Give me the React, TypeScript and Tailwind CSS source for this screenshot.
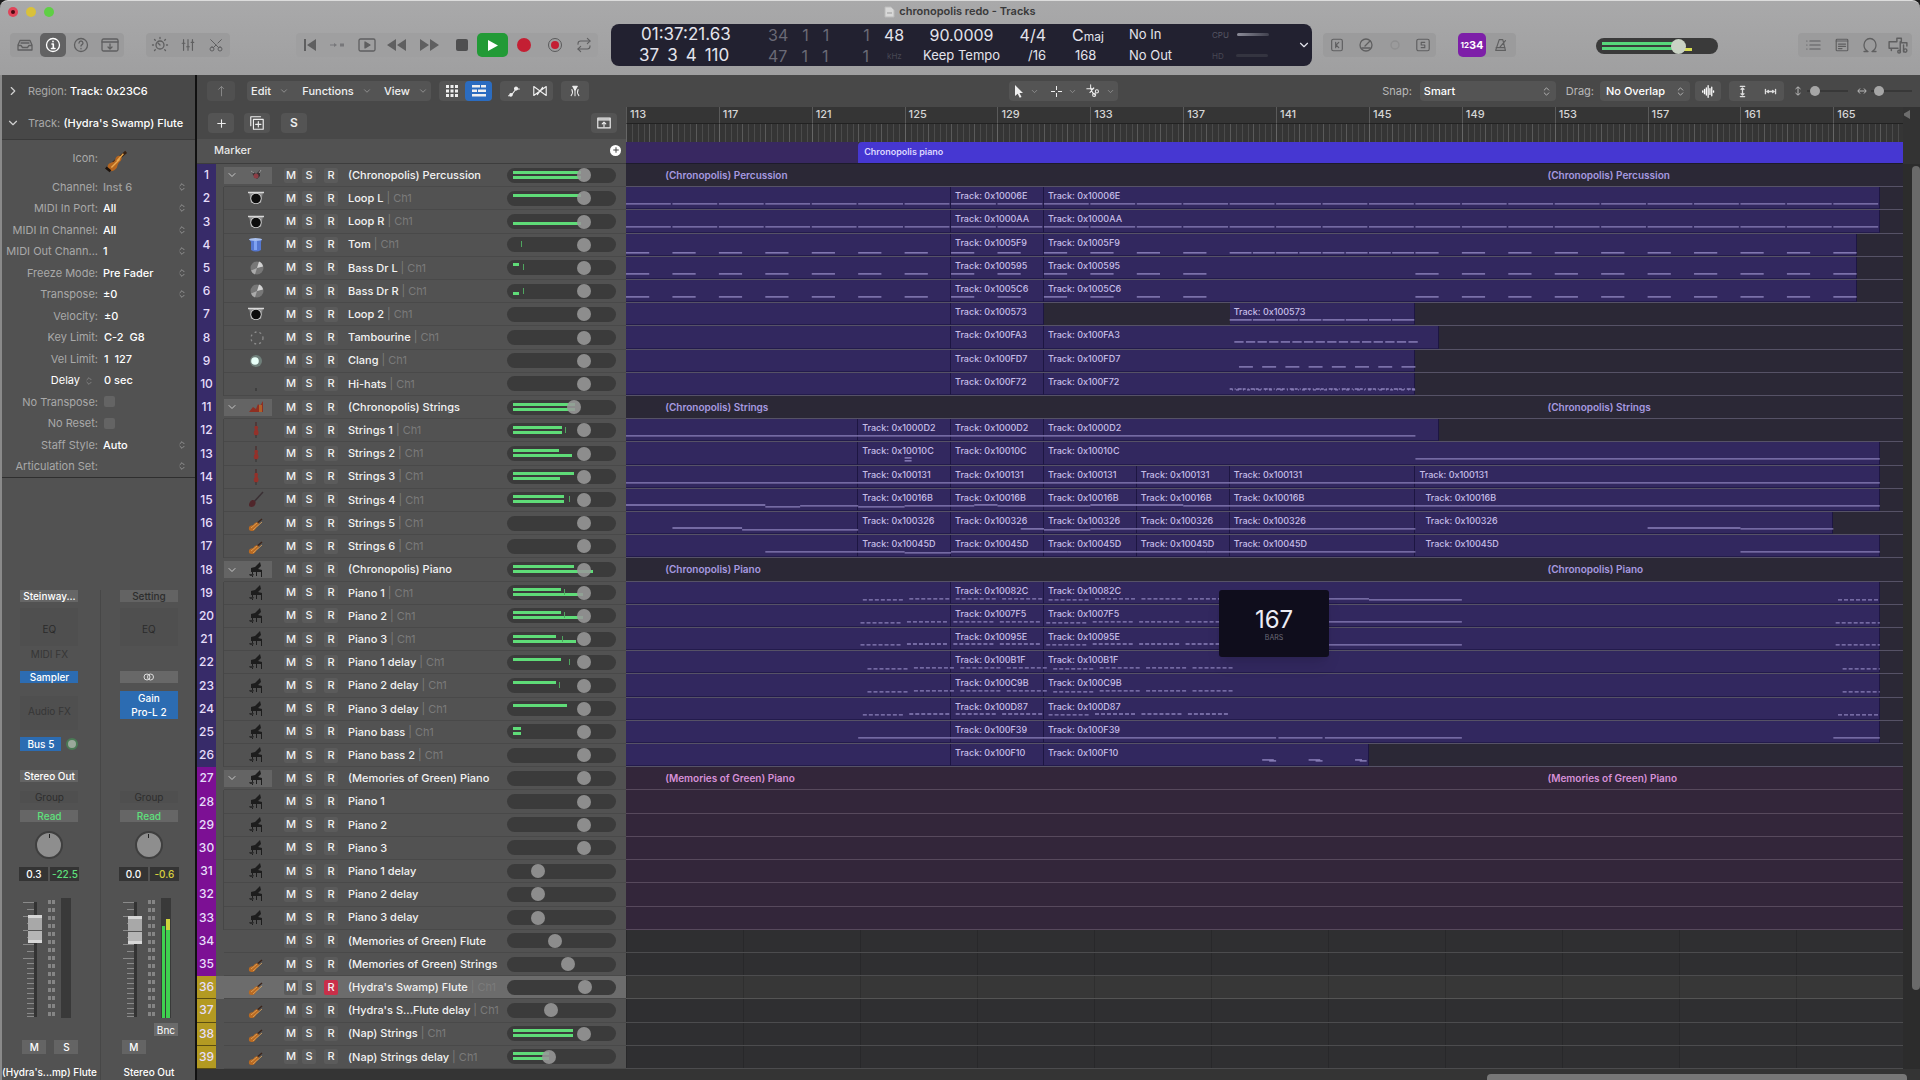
import type { ReactNode } from "react"
import { ChevronDown, ChevronRight, ChevronsUpDown, Repeat, Scissors, Plus } from "lucide-react"

const FIRST_BAR = 113
const BARS = 55

type Kind = "kit" | "loop" | "tom" | "cymbal" | "ring" | "spark" | "hat" | "section" | "cello" | "bass" | "violin" | "piano" | "none"

interface Track {
  name: string
  icon: Kind
  vol?: number
  ch?: boolean
  folder?: boolean
  top?: number
  bottom?: number
  peak?: number
  armed?: boolean
}

const tracks: Track[] = [
  { name: "(Chronopolis) Percussion", icon: "kit", folder: true, top: 68, bottom: 68 },
  { name: "Loop L", icon: "loop", ch: true, top: 68 },
  { name: "Loop R", icon: "loop", ch: true, bottom: 68 },
  { name: "Tom", icon: "tom", ch: true, peak: 8 },
  { name: "Bass Dr L", icon: "cymbal", ch: true, top: 6, peak: 10 },
  { name: "Bass Dr R", icon: "cymbal", ch: true, bottom: 6, peak: 10 },
  { name: "Loop 2", icon: "loop", ch: true },
  { name: "Tambourine", icon: "ring", ch: true },
  { name: "Clang", icon: "spark", ch: true },
  { name: "Hi-hats", icon: "hat", ch: true },
  { name: "(Chronopolis) Strings", icon: "section", folder: true, vol: 63, top: 62, bottom: 62 },
  { name: "Strings 1", icon: "cello", ch: true, top: 49, bottom: 49, peak: 52 },
  { name: "Strings 2", icon: "cello", ch: true, top: 46, bottom: 59 },
  { name: "Strings 3", icon: "cello", ch: true, top: 61, bottom: 47 },
  { name: "Strings 4", icon: "bass", ch: true, top: 51, bottom: 51, peak: 56 },
  { name: "Strings 5", icon: "violin", ch: true },
  { name: "Strings 6", icon: "violin", ch: true },
  { name: "(Chronopolis) Piano", icon: "piano", folder: true, top: 61, bottom: 80 },
  { name: "Piano 1", icon: "piano", ch: true, top: 48, bottom: 70, peak: 51 },
  { name: "Piano 2", icon: "piano", ch: true, top: 48, bottom: 70, peak: 51 },
  { name: "Piano 3", icon: "piano", ch: true, top: 43, bottom: 63, peak: 49 },
  { name: "Piano 1 delay", icon: "piano", ch: true, top: 48, peak: 56 },
  { name: "Piano 2 delay", icon: "piano", ch: true, top: 43, peak: 46 },
  { name: "Piano 3 delay", icon: "piano", ch: true, top: 54 },
  { name: "Piano bass", icon: "piano", ch: true, top: 8, bottom: 8 },
  { name: "Piano bass 2", icon: "piano", ch: true },
  { name: "(Memories of Green) Piano", icon: "piano", folder: true },
  { name: "Piano 1", icon: "piano" },
  { name: "Piano 2", icon: "piano" },
  { name: "Piano 3", icon: "piano" },
  { name: "Piano 1 delay", icon: "piano", vol: 25 },
  { name: "Piano 2 delay", icon: "piano", vol: 25 },
  { name: "Piano 3 delay", icon: "piano", vol: 25 },
  { name: "(Memories of Green) Flute", icon: "none", vol: 43 },
  { name: "(Memories of Green) Strings", icon: "violin", vol: 57 },
  { name: "(Hydra's Swamp) Flute", icon: "violin", ch: true, vol: 75, armed: true },
  { name: "(Hydra's S...Flute delay", icon: "violin", ch: true, vol: 39 },
  { name: "(Nap) Strings", icon: "violin", ch: true, top: 60, bottom: 60 },
  { name: "(Nap) Strings delay", icon: "violin", ch: true, vol: 37, top: 36, bottom: 36 },
]

// [from bar, to bar, shows label]
type Region = [number, number, boolean]
// [from bar, to bar, y, dash pattern]
type Note = [number, number, number, string?]

interface Lane {
  id?: string
  regions?: Region[]
  notes?: Note[]
}

const split = (end: number): Region[] => [
  [113, 127, false],
  [127, 131, true],
  [131, end, true],
]

const every = (from: number, to: number, step: number, len: number, y: number): Note[] => {
  const out: Note[] = []
  for (let b = from; b < to; b += step) out.push([b, b + len, y])
  return out
}

const strings = (end: number): Region[] => [
  [113, 123, false],
  [123, 127, true],
  [127, 131, true],
  [131, 135, true],
  [135, 139, true],
  [139, 147, true],
  [147, end, true],
]

const arps = (y: number, shift: number, last: number): Note[] => {
  const out: Note[] = []
  for (let b = 123; b < last; b += 2) {
    out.push([b + shift, b + shift + 1.8, y - (((b - 123) / 2) % 4 === 0 ? 0 : 1), "4 2"])
  }
  out.push([165 + shift, 167, y, "4 2"])
  return out
}

const lanes: Record<number, Lane> = {
  2: { id: "10006E", regions: split(167), notes: every(113, 167, 2, 1.93, 18) },
  3: { id: "1000AA", regions: split(167), notes: every(113, 167, 2, 1.93, 18) },
  4: { id: "1005F9", regions: split(166), notes: [...every(113, 139, 2, 1, 20), ...every(139, 147, 1, 0.94, 20), ...every(147, 166, 2, 1, 20)] },
  5: { id: "100595", regions: split(166), notes: [...every(113, 138, 2, 1, 18), ...every(147, 166, 2, 1, 18)] },
  6: { id: "1005C6", regions: split(166), notes: [...every(113, 138, 2, 1, 18), ...every(147, 166, 2, 1, 18)] },
  7: { id: "100573", regions: [[113, 127, false], [127, 131, true], [139, 147, true]], notes: every(139, 147, 1, 0.95, 18) },
  8: { id: "100FA3", regions: split(148), notes: every(139.2, 147, 0.5, 0.4, 17) },
  9: { id: "100FD7", regions: split(147), notes: every(139.4, 147, 1, 0.6, 18) },
  10: { id: "100F72", regions: split(147), notes: [[139, 147, 17, "3 2 1 2 4 1"], [139.1, 147, 18, "1 3 3 4"]] },
  12: { id: "1000D2", regions: [[113, 123, false], [123, 127, true], [127, 131, true], [131, 148, true]], notes: [[113, 147, 18]] },
  13: { id: "10010C", regions: [[113, 123, false], [123, 127, true], [127, 131, true], [131, 167, true]], notes: [[125, 125.3, 17], [125, 125.3, 20], [147, 167, 18]] },
  14: { id: "100131", regions: strings(167), notes: [[113, 167, 18]] },
  15: { id: "10016B", regions: strings(167), notes: [[113, 119, 17], [119, 120.5, 19], [120.5, 123, 18], [123, 125, 19], [125, 128, 18], [128, 129, 17], [129, 133, 18], [133, 137, 17], [137, 149, 18], [149, 167, 18]] },
  16: { id: "100326", regions: strings(165), notes: [[115, 118, 17], [118, 123, 19], [130, 131, 18], [131, 133, 19], [133, 139, 18], [139, 147, 18], [157, 161, 17], [161, 165, 18]] },
  17: { id: "10045D", regions: strings(167), notes: [[119, 125, 18], [125, 127, 19], [127, 132, 18], [132, 138, 18], [138, 147, 18], [161, 167, 18]] },
  19: { id: "10082C", regions: split(167), notes: [...arps(19, 0.2, 139), [139, 145, 18], [145, 149, 19]] },
  20: { id: "1007F5", regions: split(167), notes: [...arps(19, 0.1, 139), [139, 142, 18], [142, 145, 18], [145, 149, 18]] },
  21: { id: "10095E", regions: split(167), notes: [...arps(18, 0.1, 139), [139, 145, 18], [145, 149, 18]] },
  22: { id: "100B1F", regions: split(167), notes: arps(19, 0.4, 138) },
  23: { id: "100C9B", regions: split(167), notes: arps(19, 0.4, 138) },
  24: { id: "100D87", regions: split(167), notes: arps(18, 0.2, 138) },
  25: { id: "100F39", regions: split(167), notes: [[123, 141, 18], [141.1, 143, 18], [143.1, 149, 18], [165, 167, 18]] },
  26: { id: "100F10", regions: split(145), notes: [[140.4, 140.9, 17], [140.7, 141, 18], [142.4, 142.9, 17], [142.7, 143, 18], [144.4, 144.7, 17], [144.6, 144.9, 18]] },
}

function TrackIcon({ kind }: { kind: Kind }) {
  return (
    <svg viewBox="0 0 18 18" className="h-[18px] w-[18px] shrink-0">
      {kind === "kit" && (
        <g>
          <path d="M5 5l4 3 4-4v6l-3 3-4-4z" fill="#3a3234" />
          <circle cx="9" cy="10" r="2.500" fill="#8c3d45" />
          <path d="M4 5l3 2M14 4l-2 3" stroke="#999" />
        </g>
      )}
      {kind === "loop" && (
        <g>
          <path d="M2 3h14l-2 11H4z" fill="#8a8a8a" />
          <path d="M1 3.500h16" stroke="#d8d8d8" strokeWidth="1.500" />
          <circle cx="9" cy="9.500" r="5.500" fill="#ddd" />
          <circle cx="9" cy="9.500" r="4.800" fill="#0c0c0c" />
        </g>
      )}
      {kind === "tom" && (
        <g>
          <path d="M2 3h13l-1 3v8q-5 3-10 0V6z" fill="#5577d0" />
          <path d="M7 5h3v9H7z" fill="#7fa2f2" />
          <ellipse cx="8.500" cy="3.500" rx="6.500" ry="1.500" fill="#a9c0ee" />
        </g>
      )}
      {kind === "cymbal" && (
        <g>
          <circle cx="10" cy="9" r="6.500" fill="#777" />
          <path d="M10 9l2-6.500a6.500 6.500 0 0 1 4 5z" fill="#d2d2d2" />
          <path d="M10 9l-6 2.500a6.500 6.500 0 0 0 4 4z" fill="#aaa" />
        </g>
      )}
      {kind === "ring" && <circle cx="10" cy="9" r="6" fill="none" stroke="#8d8d8d" strokeWidth="1.300" strokeDasharray="2 3" />}
      {kind === "spark" && (
        <g>
          <circle cx="9" cy="9" r="6" fill="#6f7f7a" />
          <circle cx="8" cy="9" r="3.800" fill="#e8fff8" />
        </g>
      )}
      {kind === "hat" && <path d="M9 13v3" stroke="#2d2d2d" />}
      {kind === "section" && (
        <g fill="#8f2f22">
          <path d="M2 14l4-5 3 2 2-5 2 2 3-5v11z" />
          <path d="M12 7h3v7h-3z" fill="#b0602a" />
        </g>
      )}
      {kind === "cello" && (
        <g>
          <path d="M9 1v8" stroke="#4a2020" />
          <path d="M9 5c3 0 2 2 1.500 3.500 2 3 1 6-1.500 6s-3-3-1-6C7 7 7 5 9 5z" fill="#94312a" />
          <path d="M9 14v3" stroke="#333" />
        </g>
      )}
      {kind === "bass" && (
        <g>
          <path d="M6 12L16 1" stroke="#3a3034" strokeWidth="1.500" />
          <path d="M3 11c2-3 5-2 5.500 0s-1 5-4 5-3-3-1.500-5z" fill="#50262b" />
        </g>
      )}
      {kind === "violin" && (
        <g>
          <path d="M8 11l7-6" stroke="#3b241a" strokeWidth="1.500" />
          <path d="M8 9c3-2 5 1 3 3-2 1-2 2-3 3.500-2 2.500-7 2-6-1.500 0-3 3-2 4-3s1-1 2-2z" fill="#b96a22" />
          <path d="M4 14l6-5M15 8l-9 8" stroke="#e2a860" strokeWidth=".8" />
        </g>
      )}
      {kind === "piano" && (
        <g fill="#1d1d1d">
          <path d="M4 7l4-1 5-5 1 4-3 3 4 1v2H4z" />
          <path d="M5 11h1v5H5zM9 11h1v4H9zM14 10h1v6h-1z" />
          <path d="M2 13h5l-1 2H3z" fill="#2c2c2c" />
        </g>
      )}
    </svg>
  )
}

function BigViolin() {
  return (
    <svg viewBox="0 0 26 26" className="h-6 w-6">
      <path d="M10 14L24 2" stroke="#3a2212" strokeWidth="3" />
      <path d="M13 8c5-4 8 0 5 4-3 2-3 4-4 7-3 5-11 6-10-1 0-4 4-4 6-5s2-3 3-5z" fill="#b4651f" />
      <path d="M8 19l9-9M21 4l-7 8" stroke="#e8a850" strokeWidth="1.500" />
      <path d="M2 19l5 4" stroke="#1c120c" strokeWidth="3" />
    </svg>
  )
}

function ToolIcon({ children, size = 18 }: { children: ReactNode; size?: number }) {
  return (
    <svg width={size} height={size} viewBox="0 0 18 18" fill="none" stroke="currentColor" strokeWidth="1.300" strokeLinecap="round" strokeLinejoin="round">
      {children}
    </svg>
  )
}

function BarButton({ label, className = "", children }: { label: string; className?: string; children: ReactNode }) {
  return (
    <button type="button" aria-label={label} className={`flex h-6 items-center justify-center ${className}`}>
      {children}
    </button>
  )
}

function TopBar() {
  return (
    <header className="flex h-[75px] shrink-0 flex-col rounded-t-lg border-t border-[#dcdcdc] bg-gradient-to-b from-[#a9a9aa] to-[#9f9fa0] text-[#5f5f60]">
      <div className="grid h-5 grid-cols-[1fr_auto_1fr] items-center">
        <div className="flex gap-2 pl-2 pt-px">
          <button type="button" aria-label="Close" className="flex h-[10px] w-[10px] items-center justify-center rounded-full bg-[#e0455a]">
            <span className="h-1 w-1 rounded-full bg-[#4a0a12]" />
          </button>
          <button type="button" aria-label="Minimize" className="h-[10px] w-[10px] rounded-full bg-[#d9c13a]" />
          <button type="button" aria-label="Zoom" className="h-[10px] w-[10px] rounded-full bg-[#5fcf45]" />
        </div>
        <h1 className="flex items-center gap-1 pt-px text-[11px] font-semibold text-[#39393a]">
          <svg width="11" height="12" viewBox="0 0 11 12">
            <path d="M1 1h6l3 3v7H1z" fill="#d8d8d8" stroke="#bbb" />
            <path d="M3 7h5" stroke="#999" />
          </svg>
          chronopolis redo - Tracks
        </h1>
      </div>

      <div className="flex flex-1 items-start justify-between pt-[3px]">
        <div className="flex w-[611px] pt-[9px]">
          <div className="ml-[10px] flex rounded bg-[#9b9b9c]">
            <BarButton label="Library" className="w-[30px]">
              <ToolIcon>
                <path d="M2 9l2-4.500h10L16 9v5H2zM2 9.500h3l1.500 2h5l1.500-2h3M5 7h8" />
              </ToolIcon>
            </BarButton>
            <BarButton label="Inspector" className="w-[26px] rounded-[5px] bg-[#626263] text-white">
              <ToolIcon>
                <circle cx="9" cy="9" r="6.500" />
                <path d="M8 8h1.300v4.500M7.500 12.500h3.500M9 5.200v.5" strokeWidth="1.600" />
              </ToolIcon>
            </BarButton>
            <BarButton label="Quick Help" className="w-[30px]">
              <ToolIcon>
                <circle cx="9" cy="9" r="6.500" />
                <path d="M7 7q.3-2 2-2t2 2q0 1-1 1.600T9 10M9 12.500v.3" />
              </ToolIcon>
            </BarButton>
            <BarButton label="Toolbar" className="w-[28px]">
              <ToolIcon>
                <rect x="1" y="3" width="16" height="12" rx="1.500" />
                <path d="M1 6h16M9 8v5M7 11l2 2 2-2" />
              </ToolIcon>
            </BarButton>
          </div>
          <div className="ml-[22px] flex rounded bg-[#9b9b9c]">
            <BarButton label="Smart Controls" className="w-[28px]">
              <ToolIcon>
                <circle cx="9" cy="9" r="4" />
                <path d="M9 9l-2-2M9 1.500v1M3.500 3.500l.8.800M14.500 3.500l-.8.800M1.500 9h1M15.500 9h1M3.500 14.500l.8-.8M14.500 14.500l-.8-.8" />
              </ToolIcon>
            </BarButton>
            <BarButton label="Mixer" className="w-[28px]">
              <ToolIcon size={16}>
                <path d="M4 3v12M9 3v12M14 3v12M2.500 7h3M7.500 11h3M12.500 6h3" />
              </ToolIcon>
            </BarButton>
            <BarButton label="Editors" className="w-[28px]">
              <Scissors size={16} strokeWidth={1.500} className="-rotate-90" />
            </BarButton>
          </div>
          <div className="mr-[13px] ml-auto flex rounded bg-[#9f9fa0]">
            <BarButton label="Go to Beginning" className="w-[28px]">
              <svg width="14" height="14" viewBox="0 0 14 14" fill="currentColor"><path d="M1 1h2v12H1zM13 1v12L4 7z" /></svg>
            </BarButton>
            <BarButton label="Play from Selection" className="w-[28px]">
              <svg width="16" height="10" viewBox="0 0 16 10" fill="#77777a"><path d="M0 4.500h4V3l3 2-3 2V5.500H0zM10 3.500h4v3h-4z" /></svg>
            </BarButton>
            <BarButton label="Play from Region" className="w-[29px]">
              <ToolIcon>
                <rect x="1" y="3" width="16" height="12" rx="1.500" />
                <path d="M7 6l5 3-5 3z" fill="currentColor" />
              </ToolIcon>
            </BarButton>
            <BarButton label="Rewind" className="w-[31px]">
              <svg width="19" height="12" viewBox="0 0 19 12" fill="currentColor"><path d="M9 0v12L0 6zM19 0v12l-9-6z" /></svg>
            </BarButton>
            <BarButton label="Forward" className="w-[34px]">
              <svg width="19" height="12" viewBox="0 0 19 12" fill="currentColor"><path d="M0 0v12l9-6zM10 0v12l9-6z" /></svg>
            </BarButton>
            <BarButton label="Stop" className="w-[31px]">
              <span className="h-3 w-3 rounded-[2px] bg-[#4f4f50]" />
            </BarButton>
            <BarButton label="Play" className="w-[31px] rounded-[5px] bg-[#229a36] text-white">
              <svg width="12" height="13" viewBox="0 0 12 13" fill="currentColor"><path d="M1 1l10 5.500L1 12z" /></svg>
            </BarButton>
            <BarButton label="Record" className="w-[31px]">
              <span className="h-[14px] w-[14px] rounded-full bg-[#c41f33]" />
            </BarButton>
            <BarButton label="Capture Recording" className="w-[31px]">
              <span className="flex h-[14px] w-[14px] items-center justify-center rounded-full border border-[#5a5a5b]">
                <span className="h-2 w-2 rounded-full bg-[#c41f33]" />
              </span>
            </BarButton>
            <BarButton label="Cycle" className="w-[28px]">
              <Repeat size={16} strokeWidth={1.600} />
            </BarButton>
          </div>
        </div>

        <div className="grid h-[42px] w-[701px] shrink-0 grid-cols-[141px_120px_42px_95px_37px_50px_116px_64px_1fr] grid-rows-2 items-center rounded-lg bg-[#222130] text-[16px] leading-none text-[#e4e4ec]">
          <span className="pl-[30px] text-[17px]">01:37:21.63</span>
          <span className="flex gap-[14px] pl-[16px] text-[#6a6a76]"><b className="font-normal">34</b><b className="font-normal">1</b><b className="font-normal">1</b><b className="pl-5 font-normal">1</b></span>
          <span className="pl-[12px]">48</span>
          <span className="text-center">90.0009</span>
          <span className="text-right">4/4</span>
          <span className="pl-[26px] whitespace-nowrap">C<small className="text-[12px]">maj</small></span>
          <span className="pl-[33px] text-[13px]">No In</span>
          <span className="flex items-center gap-2 text-[8px] text-[#565663]">CPU<i className="h-[3px] w-8 rounded bg-gradient-to-r from-[#8c8c98] to-[#41414e]" /></span>
          <button type="button" aria-label="Display Mode" className="row-span-2 flex justify-end self-center pr-px"><ChevronDown size={14} /></button>
          <span className="flex gap-2 pl-[28px] text-[17px]"><b className="font-normal">37</b><b className="font-normal">3</b><b className="font-normal">4</b><b className="font-normal">110</b></span>
          <span className="flex gap-[14px] pl-[16px] text-[#6a6a76]"><b className="font-normal">47</b><b className="font-normal">1</b><b className="font-normal">1</b><b className="pl-5 font-normal">1</b></span>
          <span className="pl-[15px] text-[8px] text-[#484854]">kHz</span>
          <span className="text-center text-[13px] whitespace-nowrap">Keep Tempo</span>
          <span className="text-right text-[13px]">/16</span>
          <span className="pl-[29px] text-[13px]">168</span>
          <span className="pl-[33px] text-[13px]">No Out</span>
          <span className="flex items-center gap-2 text-[8px] text-[#484854]">HD<i className="ml-1 h-[3px] w-8 rounded bg-[#343440]" /></span>
        </div>

        <div className="flex w-[608px] pt-[9px]">
          <div className="ml-[11px] flex rounded bg-[#9b9b9c]">
            <BarButton label="Replace" className="w-[28px]">
              <ToolIcon size={16}><rect x="3" y="2.500" width="12" height="13" rx="2" /><path d="M7.500 6v6M11 6L8 9l3 3" /></ToolIcon>
            </BarButton>
            <BarButton label="Low Latency" className="w-[29px]">
              <ToolIcon><circle cx="9" cy="9" r="6" /><path d="M8 10l5-5M5 12h8" /></ToolIcon>
            </BarButton>
            <BarButton label="Tuner" className="w-[29px] opacity-20">
              <ToolIcon><circle cx="9" cy="9" r="4" /></ToolIcon>
            </BarButton>
            <BarButton label="Solo" className="w-[27px]">
              <ToolIcon size={16}><rect x="2" y="2.500" width="14" height="13" rx="2" /><path d="M11 6H7v3h4v3H7" /></ToolIcon>
            </BarButton>
          </div>
          <div className="ml-[22px] flex rounded bg-[#9b9b9c]">
            <BarButton label="Count In" className="w-[28px] rounded-[5px] bg-[#7d1fa8] text-[11px] leading-none font-bold text-white">
              <span className="text-[8px]">12</span>34
            </BarButton>
            <BarButton label="Metronome" className="w-[30px]">
              <ToolIcon size={16}><path d="M7 3h4l3 12H3zM3.500 12h10M8 11l6-7" /></ToolIcon>
            </BarButton>
          </div>
          <div className="relative mt-[5px] ml-[80px] h-4 w-[122px] rounded-full bg-[#3a3a3a]">
            <span className="absolute top-[4px] left-[6px] h-[3px] w-[80px] bg-[#57d67a]" />
            <span className="absolute top-[9px] left-[6px] h-[3px] w-[80px] bg-[#57d67a]" />
            <span className="absolute top-[10px] left-[86px] h-[3px] w-[10px] bg-[#d9de55]" />
            <input
              type="range"
              aria-label="Master Volume"
              defaultValue={70}
              className="absolute inset-0 h-4 w-full appearance-none bg-transparent [&::-webkit-slider-thumb]:h-[15px] [&::-webkit-slider-thumb]:w-[15px] [&::-webkit-slider-thumb]:appearance-none [&::-webkit-slider-thumb]:rounded-full [&::-webkit-slider-thumb]:bg-[#c9d2c4]"
            />
          </div>
          <div className="mr-[8px] ml-auto flex rounded bg-[#9b9b9c]">
            <BarButton label="List Editors" className="w-[29px]">
              <ToolIcon size={16}><path d="M5.500 4.500H17M5.500 9H17M5.500 13.500H17M2 4.500h.2M2 9h.2M2 13.500h.2" /></ToolIcon>
            </BarButton>
            <BarButton label="Note Pads" className="w-[29px]">
              <ToolIcon size={16}><rect x="2.500" y="2.500" width="13" height="13" rx="1" /><path d="M2.500 4.500h13M5 8h8M5 10.500h8M5 13h4" /></ToolIcon>
            </BarButton>
            <BarButton label="Loop Browser" className="w-[28px]">
              <ToolIcon><path d="M3 15.500h4q-4-2-4-6.500a6 6.500 0 0 1 12 0q0 4.500-4 6.500h4" /></ToolIcon>
            </BarButton>
            <BarButton label="Media Browser" className="w-[28px]">
              <ToolIcon size={20}><path d="M8 6H1v6h8M3 12v2M8 3h4v4h5v3M11 6v9M14 9v6M8 3v3" /><circle cx="10" cy="15" r="1.200" /><circle cx="15.500" cy="14" r="1.500" /></ToolIcon>
            </BarButton>
          </div>
        </div>
      </div>
    </header>
  )
}

const params = [
  { label: "Channel:", value: "Inst 6", dim: true, options: true },
  { label: "MIDI In Port:", value: "All", options: true },
  { label: "MIDI In Channel:", value: "All", options: true },
  { label: "MIDI Out Chann...", value: "1", options: true },
  { label: "Freeze Mode:", value: "Pre Fader", options: true },
  { label: "Transpose:", value: "±0", options: true },
  { label: "Velocity:", value: "±0" },
  { label: "Key Limit:", value: "C-2  G8" },
  { label: "Vel Limit:", value: "1  127" },
  { label: "Delay", value: "0 sec", delay: true },
  { label: "No Transpose:", check: true },
  { label: "No Reset:", check: true },
  { label: "Staff Style:", value: "Auto", options: true },
  { label: "Articulation Set:", value: "", options: true },
]

function Inspector() {
  return (
    <aside className="flex w-[197px] shrink-0 flex-col border-r-2 border-l-2 border-r-[#111] border-l-[#8a8a8a] bg-[#525252] text-[11px] text-[#a9a9a9]">
      <div className="flex h-8 shrink-0 items-center gap-2 bg-[#484848] pl-1">
        <ChevronRight size={14} className="text-[#d0d0d0]" />
        <span className="whitespace-nowrap">Region: <b className="font-medium text-white">Track: 0x23C6</b></span>
      </div>
      <div className="flex h-[33px] shrink-0 items-center gap-2 border-b border-[#3a3a3a] bg-[#484848] pl-1">
        <ChevronDown size={14} className="shrink-0 text-[#d0d0d0]" />
        <span className="whitespace-nowrap">Track: <b className="font-medium text-white">(Hydra's Swamp) Flute</b></span>
      </div>
      <div className="flex h-9 shrink-0 items-center">
        <span className="w-24 text-right">Icon:</span>
        <button type="button" aria-label="Track icon" className="mt-2 ml-[6px]"><BigViolin /></button>
      </div>
      <div className="flex h-[302px] shrink-0 flex-col border-b border-[#2f2f2f]">
        {params.map((p) => (
          <div key={p.label} className="flex min-h-0 flex-1 items-center">
            <label htmlFor={p.label} className={`w-24 shrink-0 text-right whitespace-nowrap ${p.delay ? "pr-1 text-white" : ""}`}>
              {p.label}
              {p.delay && <ChevronsUpDown size={10} className="ml-1 inline text-[#8a8a8a]" />}
            </label>
            {p.check ? (
              <input id={p.label} type="checkbox" className="ml-[6px] h-[11px] w-[11px] appearance-none rounded-[2px] bg-[#646464]" />
            ) : p.options ? (
              <>
                <select id={p.label} className={`ml-[5px] w-[74px] appearance-none bg-transparent font-medium ${p.dim ? "text-[#a0a0a0]" : "text-white"}`}>
                  <option>{p.value}</option>
                </select>
                <ChevronsUpDown size={10} className="text-[#9c9c9c]" />
              </>
            ) : (
              <input id={p.label} defaultValue={p.value} className="ml-[6px] w-[74px] bg-transparent font-medium text-white" />
            )}
          </div>
        ))}
      </div>
      <div className="flex min-h-0 flex-1 items-end">
        <ChannelStrip name="(Hydra's...mp) Flute" setting="Steinway..." gain="0.3" peak="-22.5" />
        <ChannelStrip name="Stereo Out" setting="Setting" gain="0.0" peak="-0.6" master />
      </div>
    </aside>
  )
}

interface StripProps {
  name: string
  setting: string
  gain: string
  peak: string
  master?: boolean
}

function ChannelStrip({ name, setting, gain, peak, master }: StripProps) {
  const slot = "flex h-3 w-[58px] items-center justify-center text-[10px] leading-none"
  return (
    <div className={`flex h-[490px] flex-1 flex-col items-center text-[10px] ${master ? "pl-[2px]" : "border-r border-[#474747] pr-[3px]"}`}>
      <button type="button" className={`${slot} font-medium ${master ? "bg-[#636363] text-[#2d2d2d]" : "bg-[#666] text-white"}`}>{setting}</button>
      <button type="button" className="mt-[6px] flex h-[38px] w-[58px] items-center justify-center bg-[#4f4f4f] pt-1 text-[#2b2b2b]">EQ</button>
      <span className="mt-[2px] flex h-3 items-center text-[10px] text-[#363636]">{master ? "" : "MIDI FX"}</span>
      {master ? (
        <>
          <button type="button" aria-label="Stereo format" className={`${slot} mt-[11px] bg-[#686868] text-[#ddd]`}>
            <svg width="12" height="8" viewBox="0 0 12 8" fill="none" stroke="currentColor"><circle cx="4" cy="4" r="3" /><circle cx="7.500" cy="4" r="3" /></svg>
          </button>
          <div className="mt-2 flex h-7 w-[58px] flex-col bg-[#2c6cb2] text-white">
            <button type="button" className="h-[14px] leading-none font-medium">Gain</button>
            <button type="button" className="h-[14px] leading-none font-medium">Pro-L 2</button>
          </div>
          <div className="h-[72px]" />
        </>
      ) : (
        <>
          <button type="button" className={`${slot} mt-[11px] bg-[#2c6cb2] font-medium text-white`}>Sampler</button>
          <button type="button" className="mt-[13px] flex h-[34px] w-[58px] items-center justify-center bg-[#4f4f4f] pb-1 text-[#363636]">Audio FX</button>
          <div className="mt-[7px] flex h-[14px] w-[58px] items-center justify-between">
            <button type="button" className="h-[14px] w-[41px] bg-[#2c6cb2] leading-none font-medium text-white">Bus 5</button>
            <span className="h-3 w-3 rounded-full border-2 border-[#4a7a55] bg-[#9aa89b]" />
          </div>
          <button type="button" className={`${slot} mt-[19px] mb-[9px] bg-[#646464] font-medium text-white`}>Stereo Out</button>
        </>
      )}
      <button type="button" className={`${slot} bg-[#4f4f4f] text-[#2d2d2d]`}>Group</button>
      <button type="button" className={`${slot} mt-[7px] bg-[#666] font-medium text-[#5fe07c]`}>Read</button>
      <div className="mt-[9px] flex h-7 w-7 justify-center rounded-full border-2 border-[#3f3f3f] bg-[#8e8e8e]" role="img" aria-label="Pan">
        <span className="mt-px h-1 w-px bg-[#222]" />
      </div>
      <div className="mt-2 flex h-[14px] w-[60px] gap-[2px] leading-[14px] font-medium">
        <span className="flex-1 bg-[#343434] text-center text-white">{gain}</span>
        <span className={`flex-1 bg-[#343434] text-center ${master ? "text-[#d7cf3e]" : "text-[#5fe07c]"}`}>{peak}</span>
      </div>
      <div className="mt-[17px] flex h-[120px] w-[60px] gap-1 pl-1">
        <div className="relative h-full w-5">
          <svg className="absolute top-1 left-0 h-[115px] w-[11px]" viewBox="0 0 11 115" preserveAspectRatio="none" stroke="#8a8a8a">
            {[0, 7, 14, 21, 28, 35, 42, 49, 56, 61, 66, 71, 76, 81, 86, 91, 96, 101, 106, 111, 114].map((y) => (
              <path key={y} d={`M${y % 14 ? 4 : 0} ${y + 0.5}H11`} />
            ))}
          </svg>
          <span className="absolute top-1 left-[11px] h-[115px] w-[3px] bg-[#333]" />
          <input
            type="range"
            aria-label={`${name} fader`}
            defaultValue={master ? 80 : 81}
            className="absolute top-0 left-[5px] h-full w-[14px] appearance-none bg-transparent [direction:rtl] [writing-mode:vertical-lr] [&::-webkit-slider-thumb]:h-[28px] [&::-webkit-slider-thumb]:w-[14px] [&::-webkit-slider-thumb]:appearance-none [&::-webkit-slider-thumb]:bg-[linear-gradient(#d5d5d5_0_12%,#a8a8a8_12%_52%,#555_52%_56%,#b5b5b5_56%_88%,#d8d8d8_88%)]"
          />
        </div>
        <svg className="h-full w-[10px]" viewBox="0 0 10 120" fill="#858585">
          {Array.from({ length: 15 }, (_, i) => (
            <path key={i} d={`M1 ${i * 8 + 2}h3v4h-3zM5 ${i * 8 + 2}h3v4h-3z`} />
          ))}
        </svg>
        <div className="flex h-full w-[10px] items-end gap-px bg-[#393939] px-px">
          {master && (
            <>
              <span className="h-[92px] flex-1 bg-[#3fd04f]" />
              <span className="h-[99px] flex-1 border-t-[11px] border-[#cfd23c] bg-[#3fd04f]" />
            </>
          )}
        </div>
      </div>
      <div className="mt-[5px] flex h-[13px] w-[58px] justify-end">
        {master && <button type="button" className="w-[24px] bg-[#6b6b6b] leading-none text-white">Bnc</button>}
      </div>
      <div className="mt-1 flex h-[14px] w-[60px] gap-2 pl-[3px] font-medium text-white">
        <button type="button" className="w-6 bg-[#646464] leading-none">M</button>
        {!master && <button type="button" className="w-6 bg-[#646464] leading-none">S</button>}
      </div>
      <span className="mt-[10px] flex h-4 items-center font-medium whitespace-nowrap text-white">{name}</span>
    </div>
  )
}

function Toolbar() {
  const btn = "flex h-5 items-center justify-center"
  return (
    <div className="flex h-8 shrink-0 items-center bg-[#484848] text-[11px] text-[#b9b9b9]">
      <div className="flex flex-1 items-center pl-[10px] font-medium text-[#efefef]">
        <button type="button" aria-label="Back" className={`${btn} w-[28px] rounded bg-[#505050] text-[#8a8a8a]`}>
          <ToolIcon size={13}><path d="M5 6l4-4 3 3M9 2v13" /></ToolIcon>
        </button>
        <div className="ml-3 flex rounded bg-[#545454]">
          <button type="button" className={`${btn} w-[46px] gap-2`}>Edit <ChevronDown size={10} className="text-[#999]" /></button>
          <button type="button" className={`${btn} w-[88px] gap-2`}>Functions <ChevronDown size={10} className="text-[#999]" /></button>
          <button type="button" className={`${btn} w-[50px] gap-2`}>View <ChevronDown size={10} className="text-[#999]" /></button>
        </div>
        <div className="ml-2 flex rounded bg-[#545454]">
          <button type="button" aria-label="Grid" className={`${btn} w-[26px]`}>
            <svg width="12" height="12" viewBox="0 0 12 12" fill="currentColor"><path d="M0 0h3v3H0zM4.500 0h3v3h-3zM9 0h3v3H9zM0 4.500h3v3H0zM4.500 4.500h3v3h-3zM9 4.500h3v3H9zM0 9h3v3H0zM4.500 9h3v3h-3zM9 9h3v3H9z" /></svg>
          </button>
          <button type="button" aria-label="Tracks view" className={`${btn} w-[27px] rounded bg-[#2b6cc0]`}>
            <svg width="14" height="12" viewBox="0 0 14 12" fill="currentColor"><path d="M0 0h8v2.500H0zM9 0h5v2.500H9zM0 4.500h5V7H0zM6 4.500h8V7H6zM0 9h14v2.500H0z" /></svg>
          </button>
        </div>
        <div className="ml-2 flex rounded bg-[#545454]">
          <button type="button" aria-label="Automation" className={`${btn} w-[26px]`}>
            <ToolIcon size={15}><path d="M3 14h3l6-8h4" /><circle cx="6" cy="13" r="1.500" fill="currentColor" /><circle cx="12" cy="5.500" r="1.800" fill="currentColor" /></ToolIcon>
          </button>
          <button type="button" aria-label="Flex" className={`${btn} w-[27px]`}>
            <ToolIcon size={16}><path d="M2 4v10l7-5zM16 4v10l-7-5zM6 13l6-8" /></ToolIcon>
          </button>
        </div>
        <button type="button" aria-label="Catch" className={`${btn} ml-2 w-[28px] rounded bg-[#545454]`}>
          <ToolIcon size={14}><path d="M6 3h6l-3 5z" fill="currentColor" /><path d="M9 7v8M5 7q2 4-1 8M13 7q-2 4 1 8" /></ToolIcon>
        </button>
      </div>

      <div className="ml-2 flex rounded bg-[#545454] text-[#efefef]">
        <button type="button" aria-label="Pointer tool" className={`${btn} w-[35px] gap-[6px]`}>
          <svg width="10" height="13" viewBox="0 0 10 13" fill="currentColor"><path d="M1 0l8 8H5.500l2 4-1.800.8-2-4L1 11z" /></svg>
          <ChevronDown size={9} className="text-[#999]" />
        </button>
        <button type="button" aria-label="Marquee tool" className={`${btn} w-[39px] gap-[6px]`}>
          <svg width="11" height="11" viewBox="0 0 11 11" stroke="currentColor"><path d="M5.500 0v4M5.500 7v4M0 5.500h4M7 5.500h4" /></svg>
          <ChevronDown size={9} className="text-[#999]" />
        </button>
        <button type="button" aria-label="Fade tool" className={`${btn} w-[35px] gap-[6px]`}>
          <ToolIcon size={14}><path d="M1 6h9M6 1q-1 7 5 13M5 11l5-6" /><circle cx="10.500" cy="14" r="2" /><circle cx="14" cy="9.500" r="2" /></ToolIcon>
          <ChevronDown size={9} className="text-[#999]" />
        </button>
      </div>

      <div className="flex flex-1 items-center justify-end pr-[8px]">
        <label htmlFor="snap">Snap:</label>
        <span className="relative ml-2 flex h-5 w-[136px] items-center rounded bg-[#545454]">
          <select id="snap" className="w-full appearance-none bg-transparent pl-1 font-medium text-white"><option>Smart</option></select>
          <ChevronsUpDown size={11} className="pointer-events-none absolute right-1" />
        </span>
        <label htmlFor="drag" className="ml-[10px]">Drag:</label>
        <span className="relative ml-[6px] flex h-5 w-[90px] items-center rounded bg-[#545454]">
          <select id="drag" className="w-full appearance-none bg-transparent pl-[6px] font-medium text-white"><option>No Overlap</option></select>
          <ChevronsUpDown size={11} className="pointer-events-none absolute right-1" />
        </span>
        <button type="button" aria-label="Waveform zoom" className={`${btn} ml-[5px] w-[26px] rounded bg-[#545454] text-white`}>
          <ToolIcon size={13}><path d="M1 8v2M3.500 6v6M6 4v10M8.500 1v16M11 5v8M13.500 3v12M16 8v2" strokeWidth="1.800" /></ToolIcon>
        </button>
        <div className="ml-[8px] flex rounded bg-[#545454] text-[#ddd]">
          <button type="button" aria-label="Fit vertically" className={`${btn} w-[27px]`}>
            <ToolIcon size={13}><path d="M6 2h6M6 16h6M9 4v10M7 6l2-2 2 2M7 12l2 2 2-2" strokeWidth="1.800" /></ToolIcon>
          </button>
          <button type="button" aria-label="Fit horizontally" className={`${btn} w-[28px]`}>
            <ToolIcon size={13}><path d="M2 6v6M16 6v6M4 9h10M6 7.500L4 9l2 1.500M12 7.500l2 1.500-2 1.500" strokeWidth="1.800" /></ToolIcon>
          </button>
        </div>
        <ZoomSlider id="vzoom" label="Vertical zoom" vertical />
        <ZoomSlider id="hzoom" label="Horizontal zoom" />
      </div>
    </div>
  )
}

function ZoomSlider({ id, label, vertical }: { id: string; label: string; vertical?: boolean }) {
  return (
    <div className="ml-[9px] flex items-center gap-1">
      <label htmlFor={id} aria-label={label} className={vertical ? "rotate-90" : ""}>
        <svg width="10" height="8" viewBox="0 0 10 8" fill="none" stroke="currentColor"><path d="M1 4h8M3 1.500L.8 4 3 6.500M7 1.500L9.200 4 7 6.500" /></svg>
      </label>
      <input
        id={id}
        type="range"
        defaultValue={10}
        className="h-[10px] w-[41px] appearance-none bg-[linear-gradient(#383838,#383838)] bg-[length:100%_2px] bg-center bg-no-repeat [&::-webkit-slider-thumb]:h-[10px] [&::-webkit-slider-thumb]:w-[10px] [&::-webkit-slider-thumb]:appearance-none [&::-webkit-slider-thumb]:rounded-full [&::-webkit-slider-thumb]:bg-[#a6a6a6]"
      />
    </div>
  )
}

function numberColor(n: number) {
  if (n >= 36) return "bg-[#b39a22] border-[#5a4d12]"
  if (n >= 27) return "bg-[#7c1094] border-[#7c1094]"
  return "bg-[#372b69] border-[#372b69]"
}

function TrackHeader({ track, n }: { track: Track; n: number }) {
  const square = "flex h-[15px] w-[14px] items-center justify-center rounded-[2px] leading-none"
  const childOf = !track.folder && n < 34
  return (
    <li className={`flex min-h-0 flex-1 items-stretch ${track.armed ? "bg-[#6c6c6c]" : ""}`}>
      <span className={`flex w-[19px] shrink-0 items-center justify-center border-b text-[12px] font-medium text-[#e6defa] ${numberColor(n)}`}>{n}</span>
      <div className="flex w-[8px] shrink-0 justify-end">{childOf && <span className="w-px bg-[#464646]" />}</div>
      <div className="flex min-w-0 flex-1 items-center border-b border-[#494949] text-[11px] font-medium text-[#f2f2f2]">
        <div className={`flex h-[17px] w-[48px] shrink-0 items-center ${track.folder ? "bg-[#646464]" : ""}`}>
          <span className="w-[23px] pl-[2px]">{track.folder && <ChevronDown size={12} className="text-[#c8c8c8]" />}</span>
          <TrackIcon kind={track.icon} />
        </div>
        <button type="button" aria-label={`Mute ${track.name}`} className={`${square} ml-[12px] bg-[#5b5b5b]`}>M</button>
        <button type="button" aria-label={`Solo ${track.name}`} className={`${square} ml-[4px] bg-[#5b5b5b]`}>S</button>
        <button type="button" aria-label={`Record ${track.name}`} className={`${square} ml-[8px] ${track.armed ? "bg-[#c92f49]" : "bg-[#5b5b5b]"}`}>R</button>
        <span className="ml-[10px] flex gap-[3px] whitespace-nowrap">
          {track.name}
          {track.ch && <span className="font-normal text-[#7b7b7b]">| Ch1</span>}
        </span>
        <div className="relative mr-[10px] ml-auto h-[15px] w-[109px] shrink-0 rounded-full bg-[#3b3b3b]">
          {track.top && <span className="absolute top-[3px] left-[6px] h-[3px] bg-[#5fdc78]" style={{ width: track.top }} />}
          {track.bottom && <span className="absolute top-[8px] left-[6px] h-[3px] bg-[#5fdc78]" style={{ width: track.bottom }} />}
          {track.peak && <span className="absolute top-[4px] h-[6px] w-px bg-[#4fa55f]" style={{ left: track.peak + 6 }} />}
          <input
            type="range"
            aria-label={`${track.name} volume`}
            defaultValue={track.vol ?? 74}
            className="absolute inset-0 h-full w-full appearance-none bg-transparent [&::-webkit-slider-thumb]:h-[14px] [&::-webkit-slider-thumb]:w-[14px] [&::-webkit-slider-thumb]:appearance-none [&::-webkit-slider-thumb]:rounded-full [&::-webkit-slider-thumb]:bg-[#989898e0]"
          />
        </div>
      </div>
    </li>
  )
}

function TrackHeaders() {
  return (
    <section className="flex w-[429px] shrink-0 flex-col bg-[#525252]">
      <div className="flex h-8 shrink-0 items-center bg-[#484848] pl-[11px] text-[#eee]">
        <button type="button" aria-label="New track" className="flex h-5 w-[26px] items-center justify-center rounded bg-[#545454]"><Plus size={13} /></button>
        <button type="button" aria-label="Duplicate track" className="ml-[10px] flex h-5 w-[26px] items-center justify-center rounded bg-[#545454]">
          <ToolIcon size={16}><path d="M2 12V2h11M5 5h11v11H5zM10.500 7.500v6M7.500 10.500h6" /></ToolIcon>
        </button>
        <button type="button" className="ml-[11px] flex h-5 w-[26px] items-center justify-center rounded bg-[#545454] text-[12px] font-semibold">S</button>
        <button type="button" aria-label="Global tracks" className="mr-[9px] ml-auto flex h-5 w-[26px] items-center justify-center rounded bg-[#545454]">
          <ToolIcon size={16}><path d="M2 3.500h14v11H2zM2 5.500h14M9 13V8M7 10l2-2 2 2" /></ToolIcon>
        </button>
      </div>
      <div className="flex h-[25px] shrink-0 items-center border-b border-[#3d3d3d] pb-[2px] pl-[17px] text-[11px] font-medium text-[#e8e8e8]">
        Marker
        <button type="button" aria-label="Add marker" className="mr-[5px] ml-auto flex h-[11px] w-[11px] items-center justify-center rounded-full bg-white text-[#444]"><Plus size={8} strokeWidth={3} /></button>
      </div>
      <ol className="flex min-h-0 flex-1 flex-col">
        {tracks.map((track, i) => (
          <TrackHeader key={i} track={track} n={i + 1} />
        ))}
      </ol>
      <div className="h-[11px] shrink-0 bg-[#343434]" />
    </section>
  )
}

function span(from: number, to: number) {
  return { gridColumn: `${from - FIRST_BAR + 1} / ${to - FIRST_BAR + 1}`, gridRow: 1 }
}

function laneColor(n: number) {
  if (n === 36) return "bg-[#373737] border-[#545454]"
  if (n >= 34) return "bg-[#2f2f31] border-[#4c4c4e]"
  if (n >= 27) return "bg-[#33263a] border-[#57495c]"
  return "bg-[#2b2836] border-[#565266]"
}

const barGrid = "grid grid-cols-[repeat(55,minmax(0,1fr))]"

function TimelineLane({ n }: { n: number }) {
  const lane = lanes[n]
  const track = tracks[n - 1]
  const beats = n >= 34 ? "bg-[image:repeating-linear-gradient(90deg,#00000026_0_1px,transparent_1px_117px)]" : ""
  return (
    <div className={`relative min-h-0 flex-1 border-b ${barGrid} ${laneColor(n)} ${beats}`}>
      {track.folder &&
        [114, 152].map((bar) => (
          <span
            key={bar}
            style={span(bar, bar + 10)}
            className={`flex items-center pl-4 text-[10px] font-semibold whitespace-nowrap ${n >= 27 ? "text-[#d790d8]" : "text-[#a79ae0]"}`}
          >
            {track.name}
          </span>
        ))}
      {lane?.regions?.map(([from, to, labelled]) => (
        <div
          key={from}
          style={span(from, to)}
          className={`border-r border-b border-r-[#1d1642] border-b-[#231b4c] bg-[#32285f] pt-[3px] text-[9px] leading-[11px] font-medium whitespace-nowrap text-[#c6bee8] ${from === 147 && n > 14 ? "pl-[10px]" : "pl-1"}`}
        >
          {labelled && `Track: 0x${lane.id}`}
        </div>
      ))}
      {lane?.notes && (
        <svg className="absolute inset-0 h-full w-full" viewBox="0 0 1276 23" preserveAspectRatio="none" stroke="#8b80ba" strokeWidth="1.500">
          {lane.notes.map(([from, to, y, dash], i) => (
            <path
              key={i}
              d={`M${(from - FIRST_BAR) * 23.2} ${y - 0.5}H${(to - FIRST_BAR) * 23.2}`}
              strokeDasharray={dash}
            />
          ))}
        </svg>
      )}
    </div>
  )
}

function Timeline() {
  const labels = Array.from({ length: 14 }, (_, i) => FIRST_BAR + i * 4)
  return (
    <section className="relative flex min-w-0 flex-1 flex-col bg-[#343434]">
      <div className="flex min-h-0 flex-1">
        <div className="flex min-w-0 flex-1 flex-col">
          <div className={`h-[35px] shrink-0 grid-rows-[17px_18px] bg-[#353535] ${barGrid}`}>
            {labels.map((bar) => (
              <span key={bar} style={span(bar, Math.min(bar + 4, FIRST_BAR + BARS))} className="border-b border-l border-b-[#222] border-l-[#5a5a5a] pl-[3px] text-[11px] leading-[14px] font-medium text-[#d5d5d5]">
                {bar}
              </span>
            ))}
            {Array.from({ length: BARS }, (_, i) => (
              <span key={i} style={{ gridRow: 2 }} className={`border-l ${i % 4 === 0 ? "border-[#666]" : "border-[#5a5a5a]"}`}>
                <span className="block h-full bg-[image:repeating-linear-gradient(90deg,transparent_0_5px,#4b4b4b_5px_6px)]" />
              </span>
            ))}
          </div>
          <div className={`h-[22px] shrink-0 border-b border-[#1d1b2c] ${barGrid}`}>
            <span style={span(113, 123)} className="bg-[#382861]" />
            <span style={span(123, 168)} className="flex items-center rounded-tl bg-[#4637d2] pb-px pl-[6px] text-[9px] font-semibold text-[#dcd6ff]">Chronopolis piano</span>
          </div>
          <div className="flex min-h-0 flex-1 flex-col">
            {tracks.map((_, i) => (
              <TimelineLane key={i} n={i + 1} />
            ))}
          </div>
        </div>
        <div className="flex w-[17px] shrink-0 flex-col items-end bg-[#2c2c2c]">
          <div className="flex h-[57px] w-full items-start bg-[#333] pt-[3px] pl-px">
            <svg width="7" height="9" viewBox="0 0 7 9" fill="#6d6d6d"><path d="M6 0v9L0 5.500v-2z" /></svg>
          </div>
          <div className="mt-[2px] h-[824px] w-2 rounded bg-[#6a6a6a]" />
        </div>
      </div>
      <div className="flex h-[11px] shrink-0 items-end justify-end bg-[#343434] pr-[13px]">
        <div className="h-[6px] w-[420px] rounded-t bg-[#777]" />
      </div>
      <div className="absolute top-[483px] left-[593px] flex h-[67px] w-[110px] flex-col items-center justify-center rounded-[3px] bg-[#0f0d1c] shadow-lg">
        <span className="text-[24px] leading-7 text-[#ececf4]">167</span>
        <span className="text-[7px] leading-2 text-[#6b6a78]">BARS</span>
      </div>
    </section>
  )
}

export default function App() {
  return (
    <div className="flex h-screen flex-col overflow-hidden bg-[#1c1c1c] font-['Inter',sans-serif]">
      <TopBar />
      <main className="flex min-h-0 flex-1">
        <Inspector />
        <div className="flex min-w-0 flex-1 flex-col">
          <Toolbar />
          <div className="flex min-h-0 flex-1">
            <TrackHeaders />
            <Timeline />
          </div>
        </div>
      </main>
    </div>
  )
}
